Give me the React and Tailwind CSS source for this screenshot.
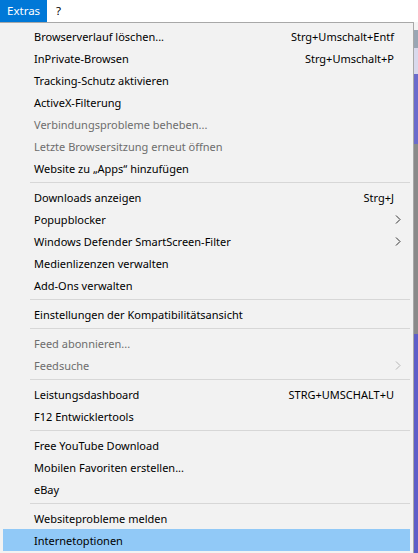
const groups = [
  [
    { label: "Browserverlauf löschen...", shortcut: "Strg+Umschalt+Entf" },
    { label: "InPrivate-Browsen", shortcut: "Strg+Umschalt+P" },
    { label: "Tracking-Schutz aktivieren" },
    { label: "ActiveX-Filterung" },
    { label: "Verbindungsprobleme beheben...", disabled: true },
    { label: "Letzte Browsersitzung erneut öffnen", disabled: true },
    { label: "Website zu „Apps“ hinzufügen" },
  ],
  [
    { label: "Downloads anzeigen", shortcut: "Strg+J" },
    { label: "Popupblocker", submenu: true },
    { label: "Windows Defender SmartScreen-Filter", submenu: true },
    { label: "Medienlizenzen verwalten" },
    { label: "Add-Ons verwalten" },
  ],
  [{ label: "Einstellungen der Kompatibilitätsansicht" }],
  [
    { label: "Feed abonnieren...", disabled: true },
    { label: "Feedsuche", disabled: true, submenu: true },
  ],
  [
    { label: "Leistungsdashboard", shortcut: "STRG+UMSCHALT+U" },
    { label: "F12 Entwicklertools" },
  ],
  [
    { label: "Free YouTube Download" },
    { label: "Mobilen Favoriten erstellen..." },
    { label: "eBay" },
  ],
  [
    { label: "Websiteprobleme melden" },
    { label: "Internetoptionen", active: true },
  ],
];

const Chevron = ({ disabled }) => (
  <svg width="6" height="9" viewBox="0 0 6 9" className={disabled ? "text-[#b5b5b5]" : "text-[#333]"}>
    <path d="M1 0.5 L5 4.5 L1 8.5" fill="none" stroke="currentColor" strokeWidth="1" />
  </svg>
);

const MenuItem = ({ label, shortcut, disabled, submenu, active }) => (
  <div
    className={
      "h-[22px] flex items-center pl-[31px] pr-[9px] " +
      (active ? "bg-[#91c9f7]" : "")
    }
  >
    <span className={"flex-1 " + (disabled ? "text-[#6d6d6d]" : "text-black")}>{label}</span>
    {shortcut && <span className="text-black mr-[7px]">{shortcut}</span>}
    {submenu && <Chevron disabled={disabled} />}
  </div>
);

export default function App() {
  return (
    <div className="w-[418px] h-[553px] overflow-hidden bg-white flex flex-col text-[11px] leading-none" style={{ fontFamily: '"Noto Sans", "Open Sans", sans-serif' }}>
      {/* menubar */}
      <div className="h-[22px] flex items-stretch shrink-0 text-[11.5px]">
        <div className="bg-[#0078d7] text-white px-[7px] flex items-center">Extras</div>
        <div className="px-[9px] flex items-center text-black">?</div>
      </div>

      <div className="flex flex-1 min-h-0">
        {/* dropdown */}
        <div className="w-[414px] bg-[#f2f2f2] border-t border-r border-[#a8a8a8] pt-[2px] px-[3px] flex flex-col">
          {groups.map((items, gi) => (
            <div key={gi}>
              {gi > 0 && (
                <div className="h-[7px] flex items-center pl-[27px]">
                  <div className="h-px w-full bg-[#d7d7d7]" />
                </div>
              )}
              {items.map((it) => (
                <MenuItem key={it.label} {...it} />
              ))}
            </div>
          ))}
        </div>

        {/* window behind */}
        <div className="flex-1 flex flex-col">
          <div className="h-[8px] bg-[#f4f4f4]" />
          <div className="h-[18px] bg-[#9aa6b4]" />
          <div className="h-[26px] bg-[#d9d9ec]" />
          <div className="h-[70px] bg-[#6b6bcb]" />
          <div className="h-[190px] bg-[#8a8a8a]" />
          <div className="flex-1 bg-[#5e5ec8]" />
        </div>
      </div>
    </div>
  );
}
